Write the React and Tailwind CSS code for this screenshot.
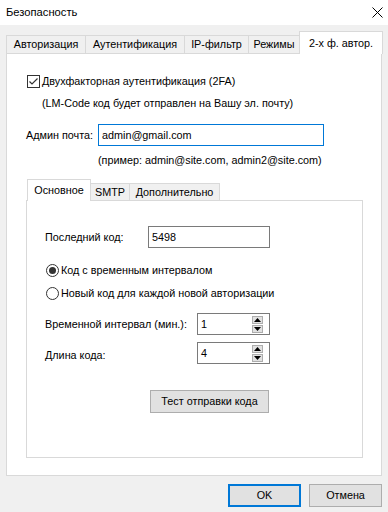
import React from "react";

function Spin({ value }) {
  return (
    <div className="w-[73px] h-[22px] border border-[#7a7a7a] bg-white flex items-center justify-between pl-[3px] pr-[6px]">
      <span>{value}</span>
      <div className="flex flex-col gap-[1px]">
        <div className="w-[11px] h-[8px] bg-[#e1e1e1] border border-[#adadad] flex items-center justify-center">
          <svg width="7" height="4" viewBox="0 0 7 4"><polygon points="3.5,0 7,4 0,4" fill="#000" /></svg>
        </div>
        <div className="w-[11px] h-[8px] bg-[#e1e1e1] border border-[#adadad] flex items-center justify-center">
          <svg width="7" height="4" viewBox="0 0 7 4"><polygon points="0,0 7,0 3.5,4" fill="#000" /></svg>
        </div>
      </div>
    </div>
  );
}

function Radio({ checked }) {
  return (
    <div className="w-[13px] h-[13px] rounded-full border border-[#333] bg-white flex items-center justify-center shrink-0">
      {checked && <div className="w-[7px] h-[7px] rounded-full bg-[#333]" />}
    </div>
  );
}

export default function App() {
  return (
    <div className="w-[388px] h-[512px] bg-[#f0f0f0] flex flex-col font-['Liberation_Sans',Arial,sans-serif] text-[10.8px] text-black leading-none whitespace-nowrap">
      <div className="h-[25px] bg-white flex items-center justify-between pl-[6px] pr-[5px] shrink-0">
        <span className="text-[11.2px]">Безопасность</span>
        <svg width="11" height="11" viewBox="0 0 11 11">
          <path d="M0.5 0.5 L10.5 10.5 M10.5 0.5 L0.5 10.5" stroke="#000" strokeWidth="1" />
        </svg>
      </div>

      <div className="pl-[6px] pt-[6px]">
        <div className="flex items-end h-[22px] relative z-10">
          <div className="w-[80px] h-[18px] border border-b-0 border-[#d9d9d9] bg-[#f0f0f0] flex items-center justify-center">Авторизация</div>
          <div className="w-[100px] h-[18px] -ml-px border border-b-0 border-[#d9d9d9] bg-[#f0f0f0] flex items-center justify-center">Аутентификация</div>
          <div className="w-[65px] h-[18px] -ml-px border border-b-0 border-[#d9d9d9] bg-[#f0f0f0] flex items-center justify-center">IP-фильтр</div>
          <div className="w-[52px] h-[18px] -ml-px border border-b-0 border-[#d9d9d9] bg-[#f0f0f0] flex items-center justify-center">Режимы</div>
          <div className="w-[84px] h-[23px] -ml-px border border-b-0 border-[#d9d9d9] bg-white flex items-center justify-center mb-[-1px]">2-х ф. автор.</div>
        </div>

        <div className="w-[376px] h-[423px] border border-[#d9d9d9] bg-white pl-[19px] pt-[20px]">
          <div className="flex items-center h-[14px] ml-[1px]">
            <div className="w-[13px] h-[13px] border border-[#333] bg-white flex items-center justify-center shrink-0">
              <svg width="11" height="11" viewBox="0 0 11 11">
                <polyline points="1.5,5.5 4,8 9.5,2.5" fill="none" stroke="#333" strokeWidth="1.2" />
              </svg>
            </div>
            <span className="ml-[2px]">Двухфакторная аутентификация (2FA)</span>
          </div>
          <div className="h-[16px] mt-[7px] ml-[16px] flex items-center">(LM-Code код будет отправлен на Вашу эл. почту)</div>

          <div className="flex items-center mt-[13px]">
            <span className="w-[72px]">Админ почта:</span>
            <div className="w-[226px] h-[22px] border border-[#0078d7] bg-white flex items-center pl-[3px]">admin@gmail.com</div>
          </div>
          <div className="h-[16px] mt-[6px] ml-[72px] flex items-center">(пример: admin@site.com, admin2@site.com)</div>

          <div className="mt-[11px]">
            <div className="flex items-end h-[21px] relative z-10 ml-[1px]">
              <div className="w-[64px] h-[22px] border border-b-0 border-[#d9d9d9] bg-white flex items-center justify-center mb-[-1px]">Основное</div>
              <div className="w-[40px] h-[17px] -ml-px border border-b-0 border-[#d9d9d9] bg-[#f0f0f0] flex items-center justify-center">SMTP</div>
              <div className="w-[91px] h-[17px] -ml-px border border-b-0 border-[#d9d9d9] bg-[#f0f0f0] flex items-center justify-center">Дополнительно</div>
            </div>
            <div className="w-[337px] h-[258px] border border-[#d9d9d9] bg-white pl-[18px] pt-[25px]">
              <div className="flex items-center">
                <span className="w-[103px]">Последний код:</span>
                <div className="w-[122px] h-[22px] border border-[#7a7a7a] bg-white flex items-center pl-[3px]">5498</div>
              </div>
              <div className="flex items-center mt-[16px] ml-[1px] h-[13px]">
                <Radio checked />
                <span className="ml-[2px]">Код с временным интервалом</span>
              </div>
              <div className="flex items-center mt-[10px] ml-[1px] h-[13px]">
                <Radio />
                <span className="ml-[2px]">Новый код для каждой новой авторизации</span>
              </div>
              <div className="flex items-center mt-[13px]">
                <span className="w-[152px]">Временной интервал (мин.):</span>
                <Spin value="1" />
              </div>
              <div className="flex items-center mt-[7px]">
                <span className="w-[152px] pt-[4px]">Длина кода:</span>
                <Spin value="4" />
              </div>
              <div className="mt-[26px] ml-[105px] w-[119px] h-[23px] border border-[#adadad] bg-[#e1e1e1] flex items-center justify-center">Тест отправки кода</div>
            </div>
          </div>
        </div>
      </div>

      <div className="flex justify-end gap-[8px] pr-[6px] mt-[8px]">
        <div className="w-[73px] h-[23px] border-2 border-[#0078d7] bg-[#e1e1e1] flex items-center justify-center">OK</div>
        <div className="w-[73px] h-[23px] border border-[#adadad] bg-[#e1e1e1] flex items-center justify-center">Отмена</div>
      </div>
    </div>
  );
}
